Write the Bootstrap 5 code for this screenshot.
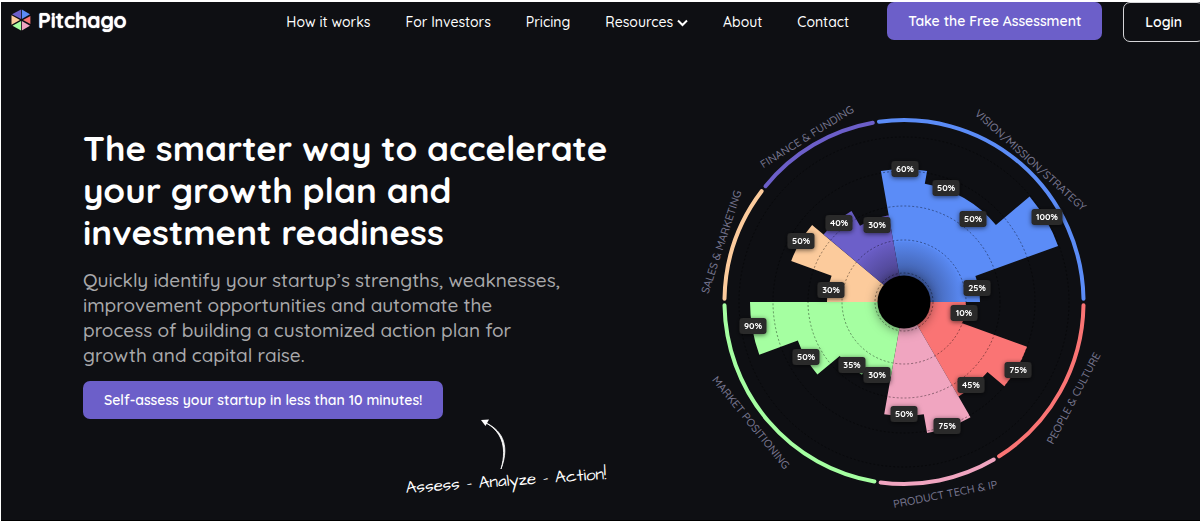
<!DOCTYPE html>
<html lang="en">
<head>
<meta charset="utf-8">
<meta name="viewport" content="width=device-width, initial-scale=1">
<title>Pitchago</title>
<link href="https://cdn.jsdelivr.net/npm/bootstrap@5.3.0/dist/css/bootstrap.min.css" rel="stylesheet">
<style>
  :root { --ink: #0e0f13; --violet: #6c5fc9; }
  body { background: #fff; font-family: Quicksand, Lato, sans-serif; font-weight: 500; color: #fff; padding: 2px 0 3px 1px; overflow-x: hidden; }
  .page { background: var(--ink); overflow: hidden; border-bottom: 1px solid #000; }
  .topbar { padding: 0 0 0 10px; align-items: flex-start; }
  .brand { color: #fff; font-size: 21px; line-height: 26px; font-weight: 700; margin-top: 5px; gap: 7px; text-shadow: 0 0 1px #fff; }
  .brand:hover { color: #fff; }
  .menu { gap: 35px; margin: 0 38px 0 auto; }
  .menu .nav-link { color: #fff; font-size: 14px; line-height: 20px; padding: 10px 0; white-space: nowrap; }
  .btn-violet, .btn-login { font-size: 14px; line-height: 20px; font-weight: 600; color: #fff; border-radius: 7px; white-space: nowrap; }
  .btn-violet { background: var(--violet); border: 0; padding: 9px 21px; }
  .btn-violet:hover { background: #5b4fb8; color: #fff; }
  .btn-login { border: 1px solid #d5d5d8; padding: 9px 21px; margin: 0 -4px 0 21px; }
  .btn-login:hover { border-color: #fff; color: #fff; }
  .pitch { padding: 85px 0 0 82px; }
  .headline { font-size: 35px; line-height: 42px; font-weight: 700; margin-bottom: 15px; }
  .intro { font-size: 19px; line-height: 25px; color: #a9a9ab; margin-bottom: 13px; }
  .note { width: 220px; margin-left: 317px; }
  .note text { font-family: "Architects Daughter", cursive; font-size: 17px; font-weight: 400; }
  .wheel { max-width: 410px; margin-top: 40px; overflow: visible; }
  .wheel .area { font-size: 11px; fill: #77768f; text-anchor: middle; }
  .wheel .score { font-size: 9px; font-weight: 700; fill: #fff; text-anchor: middle; }
</style>
</head>
<body>
<div class="page">
  <header class="topbar d-flex">
    <a class="brand d-flex align-items-center text-decoration-none" href="#">
      <svg width="20" height="22" viewBox="0 0 20 22" aria-hidden="true">
        <path fill="#6c5fc9" d="M10 .5V10L1 5.300z"/><path fill="#5b8cf7" d="M10.800.5 19 5.300 10.800 10z"/>
        <path fill="#fccb9c" d="M.5 6.200 9 11 .5 15.800z"/><path fill="#fa7474" d="M19.400 7V15L12 11z"/>
        <path fill="#a5ffa1" d="M10 12V21.500L1.500 16.800z"/><path fill="#f0a5c0" d="M10.800 12 19 16.800 10.800 21.500z"/>
      </svg>
      <span>Pitchago</span>
    </a>
    <nav class="menu d-flex" aria-label="Main">
      <a class="nav-link" href="#">How it works</a>
      <a class="nav-link" href="#">For Investors</a>
      <a class="nav-link" href="#">Pricing</a>
      <a class="nav-link" href="#">Resources
        <svg width="11" height="8" viewBox="0 0 11 8" fill="none" stroke="#fff" stroke-width="2" aria-hidden="true"><path d="M1 1.500 5.500 6 10 1.500"/></svg></a>
      <a class="nav-link" href="#">About</a>
      <a class="nav-link" href="#">Contact</a>
    </nav>
    <button class="btn btn-violet" type="button">Take the Free Assessment</button>
    <button class="btn btn-login" type="button">Login</button>
  </header>

  <main class="row g-0">
    <section class="col-7 pitch">
      <h1 class="headline">The smarter way to accelerate<br>your growth plan and<br>investment readiness</h1>
      <p class="intro">Quickly identify your startup’s strengths, weaknesses,<br>improvement opportunities and automate the<br>process of building a customized action plan for<br>growth and capital raise.</p>
      <button class="btn btn-violet" type="button">Self-assess your startup in less than 10 minutes!</button>
      <svg class="note d-block" viewBox="400 419 220 84" role="img" aria-label="Assess - Analyze - Action!">
        <path d="M481 420l8-.5-3.500 6.500z" fill="#fff"/>
        <path d="M485 422.500C500 429 511 443 501 469 508 445 500 430 485 422.500z" fill="#fff" stroke="#fff" stroke-width=".8"/>
        <text transform="translate(406 493) rotate(-4)" fill="#fff">Assess - Analyze - Action!</text>
      </svg>
    </section>
    <section class="col-5">
      <svg class="wheel d-block w-100" viewBox="700 82 410 438" role="img" aria-label="Startup readiness scores">
        <defs>
          <filter id="lift" x="-40%" y="-60%" width="180%" height="220%"><feDropShadow dx="0" dy="1" stdDeviation="2.500" flood-color="#000" flood-opacity=".6"/></filter>
          <filter id="hubSoft" x="-50%" y="-50%" width="200%" height="200%"><feGaussianBlur stdDeviation="6"/></filter>
          <radialGradient id="hubShade" gradientUnits="userSpaceOnUse" cx="904" cy="298" r="60"><stop offset=".4" stop-color="#15152a" stop-opacity=".38"/><stop offset="1" stop-color="#15152a" stop-opacity="0"/></radialGradient>
        </defs>
        <g id="wedges"></g>
        <path d="M904 302L858 263A60 60 0 0 1 964 302z" fill="url(#hubShade)"/>
        <circle cx="904" cy="303" r="27" fill-opacity=".5" filter="url(#hubSoft)"/>
        <g fill="none" stroke="#000" stroke-opacity=".4" stroke-dasharray="2 2">
          <circle cx="904" cy="302" r="29"/><circle cx="904" cy="302" r="62"/><circle cx="904" cy="302" r="96"/><circle cx="904" cy="302" r="131"/><circle cx="904" cy="302" r="165"/>
        </g>
        <circle cx="904" cy="302" r="26.500"/>
        <g id="rim" fill="none" stroke-width="4" stroke-linecap="round"></g>
        <g id="scores" filter="url(#lift)"></g>
        <g class="area">
          <text transform="translate(809 140) rotate(-32)">FINANCE &amp; FUNDING</text>
          <text transform="translate(1028 163) rotate(42)">VISION/MISSION/STRATEGY</text>
          <text transform="translate(725 243) rotate(-72)">SALES &amp; MARKETING</text>
          <text transform="translate(748 425) rotate(51)">MARKET POSITIONING</text>
          <text transform="translate(946 498) rotate(-11)">PRODUCT TECH &amp; IP</text>
          <text transform="translate(1077 400) rotate(-62)">PEOPLE &amp; CULTURE</text>
        </g>
      </svg>
    </section>
  </main>
</div>
<script src="https://cdn.jsdelivr.net/npm/bootstrap@5.3.0/dist/js/bootstrap.bundle.min.js"></script>
<script>
  const cx = 904, cy = 302;
  // first angle (clockwise from the top), rim start and end, colour, radii of the 20-degree wedges
  const areas = [
    [-10, -9, 90, '#5b8cf7', [133, 120, 120, 164, 76]],
    [90, 90, 149, '#fa7474', [62, 131, 109]],
    [150, 149, 188.5, '#f0a5c0', [133, 114]],
    [190, 188.5, 270, '#a5ffa1', [76, 84, 113, 154]],
    [270, 270, 308.5, '#fccb9c', [77, 120]],
    [310, 308.5, 351, '#6c5fc9', [105, 88]]
  ];
  const at = (deg, rx, ry = rx) => {
    const a = deg * Math.PI / 180;
    return (cx + rx * Math.sin(a)).toFixed(1) + ' ' + (cy - ry * Math.cos(a)).toFixed(1);
  };
  let wedges = '', rim = '';
  for (const [first, from, to, colour, radii] of areas) {
    let d = `M${cx} ${cy}`;
    radii.forEach((r, i) => {
      const a = first + i * 20;
      d += `L${at(a, r)}A${r} ${r} 0 0 1 ${at(a + 20, r)}`;
    });
    wedges += `<path fill="${colour}" d="${d}z"/>`;
    rim += `<path stroke="${colour}" d="M${at(from + 1, 179.5, 182)}A179.5 182 0 0 1 ${at(to - 1, 179.5, 182)}"/>`;
  }
  document.getElementById('wedges').innerHTML = wedges;
  document.getElementById('rim').innerHTML = rim;
  const scores = [[60,905,169],[50,946,188],[50,973,219],[100,1047,217],[25,977,288],[10,964,313],[75,1018,370],[45,971,385],[75,947,426],[50,904,414],[30,877,375],[35,852,365],[50,806,357],[90,753,326],[30,831,290],[50,801,241],[40,839,223],[30,877,225]];
  document.getElementById('scores').innerHTML = scores.map(([v, x, y]) => {
    const w = v === 100 ? 31 : 27;
    return `<rect x="${x - w / 2}" y="${y - 8}" width="${w}" height="16" rx="3" fill="#292929"/><text class="score" x="${x}" y="${y + 3}">${v}%</text>`;
  }).join('');
</script>
</body>
</html>
